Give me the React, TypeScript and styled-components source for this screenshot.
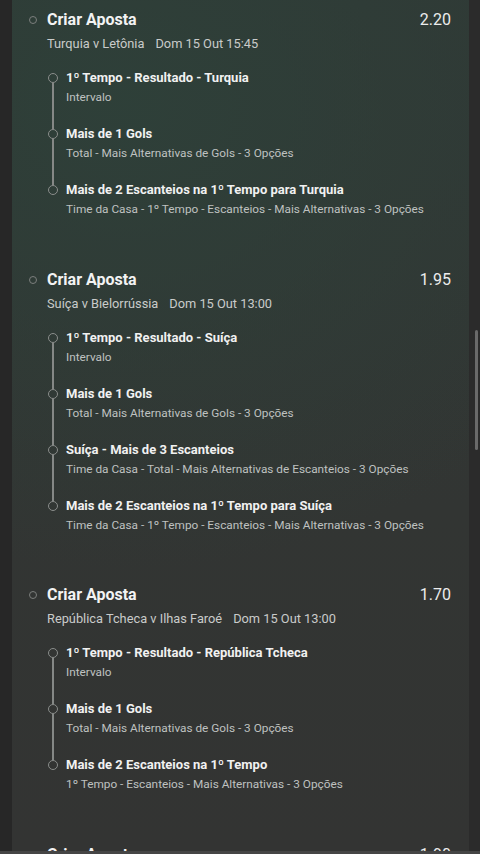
import styled, { createGlobalStyle } from 'styled-components';

type Leg = { title: string; detail: string };
type Bet = { match: string; date: string; odds: string; legs: Leg[] };

const bets: Bet[] = [
  {
    match: 'Turquia v Letônia',
    date: 'Dom 15 Out 15:45',
    odds: '2.20',
    legs: [
      { title: '1º Tempo - Resultado - Turquia', detail: 'Intervalo' },
      { title: 'Mais de 1 Gols', detail: 'Total - Mais Alternativas de Gols - 3 Opções' },
      {
        title: 'Mais de 2 Escanteios na 1º Tempo para Turquia',
        detail: 'Time da Casa - 1º Tempo - Escanteios - Mais Alternativas - 3 Opções',
      },
    ],
  },
  {
    match: 'Suíça v Bielorrússia',
    date: 'Dom 15 Out 13:00',
    odds: '1.95',
    legs: [
      { title: '1º Tempo - Resultado - Suíça', detail: 'Intervalo' },
      { title: 'Mais de 1 Gols', detail: 'Total - Mais Alternativas de Gols - 3 Opções' },
      {
        title: 'Suíça - Mais de 3 Escanteios',
        detail: 'Time da Casa - Total - Mais Alternativas de Escanteios - 3 Opções',
      },
      {
        title: 'Mais de 2 Escanteios na 1º Tempo para Suíça',
        detail: 'Time da Casa - 1º Tempo - Escanteios - Mais Alternativas - 3 Opções',
      },
    ],
  },
  {
    match: 'República Tcheca v Ilhas Faroé',
    date: 'Dom 15 Out 13:00',
    odds: '1.70',
    legs: [
      { title: '1º Tempo - Resultado - República Tcheca', detail: 'Intervalo' },
      { title: 'Mais de 1 Gols', detail: 'Total - Mais Alternativas de Gols - 3 Opções' },
      {
        title: 'Mais de 2 Escanteios na 1º Tempo',
        detail: '1º Tempo - Escanteios - Mais Alternativas - 3 Opções',
      },
    ],
  },
  {
    match: 'Alemanha v Estados Unidos',
    date: 'Dom 15 Out 13:00',
    odds: '1.90',
    legs: [],
  },
];

function BetGroup({ bet }: { bet: Bet }) {
  return (
    <Group>
      <Header>
        <HeadDot />
        <Title>Criar Aposta</Title>
        <Odds>{bet.odds}</Odds>
      </Header>
      <Fixture>
        <span>{bet.match}</span>
        <span>{bet.date}</span>
      </Fixture>
      <Legs>
        {bet.legs.map((leg, i) => (
          <LegRow key={i} $last={i === bet.legs.length - 1}>
            <Rail>
              <LegDot />
              {i < bet.legs.length - 1 && <RailLine />}
            </Rail>
            <LegBody>
              <LegTitle>{leg.title}</LegTitle>
              <LegDetail>{leg.detail}</LegDetail>
            </LegBody>
          </LegRow>
        ))}
      </Legs>
    </Group>
  );
}

export default function App() {
  return (
    <>
      <GlobalStyle />
      <Screen>
        <Body>
          <SideStrip />
          <Panel>
            {bets.map((bet) => (
              <BetGroup key={bet.match} bet={bet} />
            ))}
          </Panel>
          <ScrollTrack>
            <ScrollThumb />
          </ScrollTrack>
        </Body>
        <BottomBar />
      </Screen>
    </>
  );
}

const GlobalStyle = createGlobalStyle`
  html, body {
    margin: 0;
    padding: 0;
    background: #262626;
  }
  body {
    font-family: Roboto, 'Noto Sans', sans-serif;
  }
`;

const Screen = styled.div`
  width: 480px;
  height: 854px;
  display: flex;
  flex-direction: column;
  overflow: hidden;
`;

const Body = styled.div`
  flex: 1;
  display: flex;
  min-height: 0;
`;

const SideStrip = styled.div`
  width: 12px;
  background: #272727;
`;

const Panel = styled.div`
  flex: 1;
  padding: 9px 18px 0 17px;
  overflow: hidden;
  background:
    radial-gradient(ellipse 120% 55% at 25% 12%, rgba(46, 64, 57, 0.95) 0%, rgba(46, 64, 57, 0) 100%),
    linear-gradient(180deg, #303835 0%, #323533 60%, #333433 100%);
`;

const ScrollTrack = styled.div`
  width: 11px;
  background: #2b2b2b;
  display: flex;
  justify-content: flex-end;
  padding-top: 330px;
`;

const ScrollThumb = styled.div`
  width: 3px;
  height: 120px;
  margin-right: 2px;
  border-radius: 2px;
  background: #6a6a6a;
`;

const BottomBar = styled.div`
  height: 3px;
  background: #454545;
`;

const Group = styled.section`
  margin-bottom: 49.5px;
`;

const Header = styled.div`
  display: flex;
  align-items: center;
  height: 22px;
`;

const HeadDot = styled.span`
  width: 8px;
  height: 8px;
  box-sizing: border-box;
  border: 1.5px solid #7c7f7d;
  border-radius: 50%;
  margin-right: 10px;
  flex-shrink: 0;
`;

const Title = styled.h2`
  margin: 0;
  flex: 1;
  font-size: 16px;
  line-height: 22px;
  font-weight: 700;
  color: #f3f3f3;
`;

const Odds = styled.span`
  font-size: 16px;
  line-height: 22px;
  color: #ececec;
`;

const Fixture = styled.div`
  display: flex;
  gap: 11px;
  margin: 4px 0 0 18px;
  font-size: 12.8px;
  line-height: 18px;
  color: #c9cbca;
`;

const Legs = styled.div`
  margin: 16px 0 0 19px;
`;

const LegRow = styled.div<{ $last: boolean }>`
  display: flex;
  height: ${(p) => (p.$last ? 38 : 56)}px;
`;

const Rail = styled.div`
  width: 10px;
  margin-right: 8px;
  display: flex;
  flex-direction: column;
  align-items: center;
  padding-top: 4px;
  box-sizing: border-box;
`;

const LegDot = styled.span`
  width: 10px;
  height: 10px;
  box-sizing: border-box;
  border: 1.5px solid #8a8d8b;
  border-radius: 50%;
  flex-shrink: 0;
`;

const RailLine = styled.span`
  flex: 1;
  width: 2px;
  background: #858886;
  margin-bottom: -4px;
`;

const LegBody = styled.div`
  display: flex;
  flex-direction: column;
  gap: 1px;
`;

const LegTitle = styled.div`
  font-size: 13px;
  line-height: 18px;
  font-weight: 700;
  color: #f1f1f1;
  white-space: nowrap;
`;

const LegDetail = styled.div`
  font-size: 11.8px;
  line-height: 18px;
  color: #bfc1c0;
  white-space: nowrap;
`;
